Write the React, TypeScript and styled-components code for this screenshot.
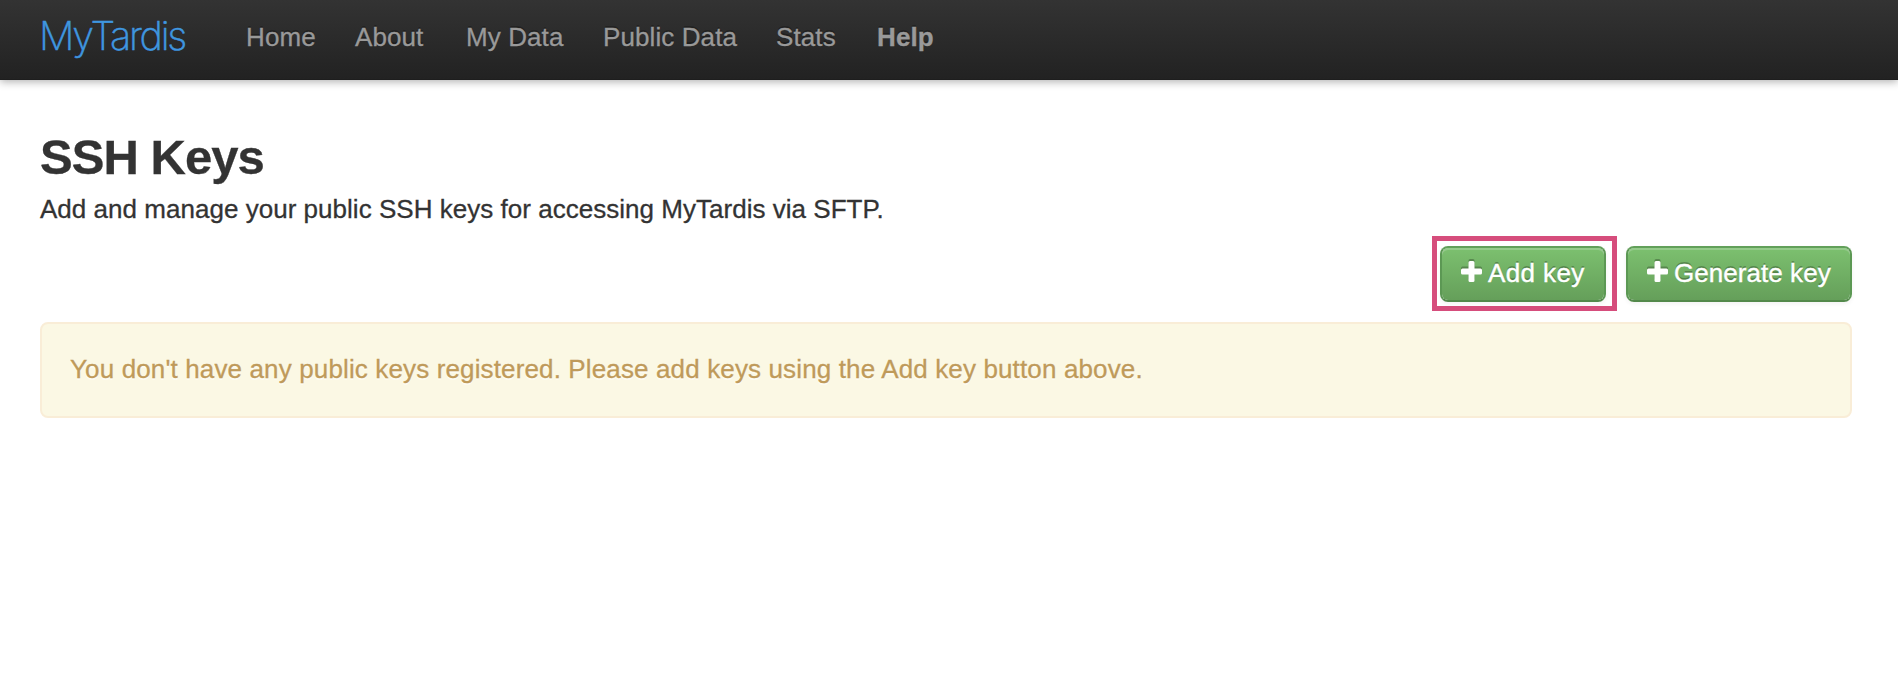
import React from "react";
import styled, { createGlobalStyle } from "styled-components";

const GlobalStyle = createGlobalStyle`
  body {
    margin: 0;
    background: #fff;
    color: #333;
    font: 26px/40px "Liberation Sans", Arial, sans-serif;
    -webkit-text-stroke: 0.3px currentColor;
  }
`;

const Navbar = styled.header`
  box-sizing: border-box;
  height: 80px;
  padding-left: 39px;
  display: flex;
  align-items: flex-start;
  background: linear-gradient(#333, #222);
  border-bottom: 1px solid #1e1e1e;
  box-shadow: 0 2px 8px rgba(0, 0, 0, 0.3);
`;

const Brand = styled.a`
  width: 207px;
  padding-top: 16px;
  font: 200 39.5px/40px Inter, sans-serif;
  letter-spacing: -2.25px;
  color: #3f97e0;
  -webkit-text-stroke: 0.5px currentColor;
`;

const NavList = styled.nav`
  display: flex;
  padding-top: 17px;
`;

const NavLink = styled.a<{ $width: number; $bold?: boolean }>`
  width: ${(p) => p.$width}px;
  white-space: nowrap;
  letter-spacing: 0.1px;
  font-weight: ${(p) => (p.$bold ? 700 : 400)};
  color: #999;
  text-shadow: 0 -2px 0 rgba(0, 0, 0, 0.25);
`;

const Page = styled.main`
  padding: 47px 46px 0 40px;
`;

const Title = styled.h1`
  margin: 0 0 2px;
  font-size: 49px;
  line-height: 60px;
  font-weight: 700;
  letter-spacing: -0.95px;
`;

const Lead = styled.p`
  margin: 0;
  letter-spacing: 0.025px;
`;

const Actions = styled.div`
  display: flex;
  justify-content: flex-end;
  align-items: baseline;
  gap: 9px;
  margin-top: 7px;
`;

const Highlight = styled.div`
  padding: 5px 6px 4px 3px;
  border: 5px solid #d64d7c;
`;

const Button = styled.button<{ $width: number }>`
  box-sizing: border-box;
  width: ${(p) => p.$width}px;
  height: 56px;
  padding: 0 0 2px 19px;
  display: flex;
  align-items: center;
  gap: 6px;
  border: 2px solid;
  border-color: #62a05a #5c9854 #53894b;
  border-radius: 8px;
  background: linear-gradient(#7cc06f, #659f5a) padding-box;
  box-shadow: inset 0 2px 0 rgba(255, 255, 255, 0.2), 0 2px 4px rgba(0, 0, 0, 0.05);
  color: #fff;
  font: 26px/40px "Liberation Sans", Arial, sans-serif;
  -webkit-text-stroke: 0.4px currentColor;
  text-shadow: 0 -2px 0 rgba(0, 0, 0, 0.25);
  white-space: nowrap;
`;

const Plus = styled.svg`
  width: 21px;
  height: 21px;
  margin-bottom: 3px;
  flex: none;
  fill: #fff;
  overflow: visible;
  filter: drop-shadow(0 -2px 0 rgba(0, 0, 0, 0.25));
`;

const Label = styled.span<{ $spacing: number }>`
  letter-spacing: ${(p) => p.$spacing}px;
`;

const Alert = styled.div`
  box-sizing: border-box;
  height: 96px;
  margin-top: 11px;
  padding: 25px 28px;
  border: 2px solid #f9edd7;
  border-radius: 8px;
  background: #fbf8e4;
  color: #bf9a5a;
  letter-spacing: 0.135px;
  text-shadow: 0 2px 0 rgba(255, 255, 255, 0.5);
`;

const links = [
  { label: "Home", width: 109 },
  { label: "About", width: 111 },
  { label: "My Data", width: 137 },
  { label: "Public Data", width: 173 },
  { label: "Stats", width: 101 },
  { label: "Help", width: 60, bold: true },
];

function PlusIcon() {
  return (
    <Plus viewBox="0 0 21 21" aria-hidden="true">
      <path d="M9 0h3Q13.500 0 13.500 1.500V7.500H19.500Q21 7.500 21 9v3Q21 13.500 19.500 13.500H13.500V19.500Q13.500 21 12 21H9Q7.500 21 7.500 19.500V13.500H1.500Q0 13.500 0 12V9Q0 7.500 1.500 7.500h6V1.500Q7.500 0 9 0z" />
    </Plus>
  );
}

export default function App() {
  return (
    <>
      <GlobalStyle />
      <Navbar>
        <Brand>MyTardis</Brand>
        <NavList>
          {links.map((l) => (
            <NavLink key={l.label} $width={l.width} $bold={l.bold}>
              {l.label}
            </NavLink>
          ))}
        </NavList>
      </Navbar>
      <Page>
        <Title>SSH Keys</Title>
        <Lead>Add and manage your public SSH keys for accessing MyTardis via SFTP.</Lead>
        <Actions>
          <Highlight>
            <Button $width={166}>
              <PlusIcon />
              <Label $spacing={0.4}>Add key</Label>
            </Button>
          </Highlight>
          <Button $width={226}>
            <PlusIcon />
            <Label $spacing={0.05}>Generate key</Label>
          </Button>
        </Actions>
        <Alert>
          You don't have any public keys registered. Please add keys using the Add key button above.
        </Alert>
      </Page>
    </>
  );
}
